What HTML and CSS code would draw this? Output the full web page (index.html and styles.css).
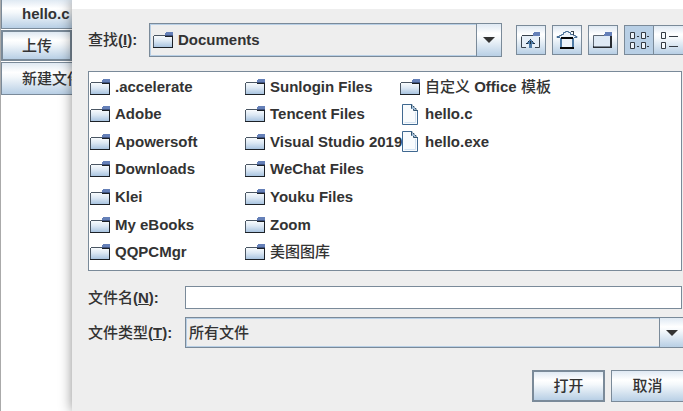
FILE: index.html
```html
<!DOCTYPE html>
<html lang="zh-CN">
<head>
<meta charset="utf-8">
<title>Documents</title>
<link rel="stylesheet" href="styles.css">
</head>
<body>
<svg class="defs" aria-hidden="true">
  <defs>
    <linearGradient id="fill" x1="0" y1="0" x2="0" y2="1">
      <stop offset="0" stop-color="#f8fbfd"/><stop offset=".45" stop-color="#dce8f4"/><stop offset="1" stop-color="#a9c4e0"/>
    </linearGradient>
    <symbol id="folder" viewBox="0 0 20 16">
      <path d="M1 15V4H19V15Z" fill="url(#fill)"/>
      <path d="M0 4H1V15H0ZM1 3H12V4H1Z" fill="#4a5663"/>
      <path d="M12 4H20V5H12ZM19 4H20V16H19ZM0 15H20V16H0Z" fill="#1c2127"/>
      <path d="M12 1H13V0H20V3H12Z" fill="#6580b8"/>
      <path d="M12 3H20V4H12Z" fill="#3f5380"/>
    </symbol>
    <symbol id="file" viewBox="0 0 16 21">
      <path d="M1 1H10L15 6V20H1Z" fill="#f8fbfd"/>
      <path d="M13.500 8V18.500H2.500" fill="none" stroke="#d3e2f1"/>
      <path d="M10 .500H.500V20.500H15.500V6" fill="none" stroke="#3f6890"/>
      <path d="M10 .500V2.500H12V4.500H14V6.500H15.500M9.500 1V4.500H11.500V6.500H14" fill="none" stroke="#31536f"/>
      <path d="M10 2H11V4H13V6H12V5H10Z" fill="#a3bfdc"/>
    </symbol>
  </defs>
</svg>
<div class="window">
  <nav class="side">
    <button class="metal side-button">hello.c</button>
    <button class="metal side-button focused"><span class="cn">上传</span></button>
    <button class="metal side-button"><span class="cn">新建文件</span></button>
  </nav>
  <main class="dialog">
    <div class="title-strip"></div>
    <div class="content">
      <div class="toolbar">
        <label class="look-label" for="look"><span class="cn">查找</span>(<u>I</u>):</label>
        <div class="combo with-icon">
          <select id="look"><option>Documents</option></select>
          <svg class="combo-icon" aria-hidden="true"><use href="#folder"/></svg>
          <span class="metal arrow"></span>
        </div>
        <div class="tools">
          <button class="metal tool" aria-label="向上">
            <svg viewBox="0 0 20 17" width="20" height="17"><path d="M1 4H18V15H1Z" fill="#e6eff8"/><path d="M5 15.500H.500V4.500M1 3.500H12M14 15.500H18.500V5" fill="none" stroke="#38424d"/><path d="M12 1H13V0H19V4H12Z" fill="#6580b8"/><path d="M9 7H10V8H11V9H12V10H13V11H14V12H11V16H8V12H5V11H6V10H7V9H8V8H9Z" fill="#4f7ba6"/><path d="M9 7H10V8H9ZM7 9H8V10H7ZM11 9H12V10H11ZM5 11H7V12H5ZM12 11H14V12H12ZM9 9H10V12H9Z" fill="#1c2f42"/></svg>
          </button>
          <button class="metal tool" aria-label="主目录">
            <svg viewBox="0 0 22 20" width="22" height="20"><path d="M1 7L11 1L21 7V8H1Z" fill="#edf3f9"/><path d="M4 8H18V18H4Z" fill="#4f7ba6"/><path d="M6 8H16V18H6Z" fill="#edf3f9"/><path d="M1 7.500V6.500H3.500V5.500H5.500V4.500H7.500V2.500H9.500V1.500H12.500V2.500H14.500V4.500H17.500V5.500H19.500V6.500H21V7.500H18M1 7.500H4" fill="none" stroke="#456c94"/><path d="M15 1H18V5H17V2H15Z" fill="#38424d"/><path d="M5 7H17V9H5ZM4 17H18V19H4Z" fill="#050505"/></svg>
          </button>
          <button class="metal tool" aria-label="新建文件夹">
            <svg viewBox="0 0 20 16" width="20" height="16"><path d="M1 4H18V15H1Z" fill="#dfeaf5"/><path d="M.500 15V3.500H12" fill="none" stroke="#5b6672"/><path d="M0 14H17V4H19V16H0Z" fill="#282d33"/><path d="M1 14H17V15H1Z" fill="#7f8994"/><path d="M11 2H12V0H19V4H11Z" fill="#6580b8"/></svg>
          </button>
          <div class="views">
            <button class="metal tool pressed" aria-label="列表">
              <svg viewBox="0 0 20 18" width="20" height="18"><path d="M1.500 1.500H5.500V7.500H1.500ZM12.500 1.500H16.500V7.500H12.500ZM1.500 11.500H5.500V17.500H1.500ZM12.500 11.500H16.500V17.500H12.500Z" fill="#edf3f9" stroke="#343b43"/><path d="M8 5.500H10M18 5.500H20M8 15.500H10M18 15.500H20" stroke="#343b43"/></svg>
            </button>
            <button class="metal tool" aria-label="详细信息">
              <svg viewBox="0 0 18 18" width="18" height="18"><path d="M1.500 1.500H5.500V7.500H1.500ZM1.500 11.500H5.500V17.500H1.500Z" fill="#f6fafd" stroke="#343b43"/><path d="M9 5.500H18M9 15.500H18" stroke="#343b43"/></svg>
            </button>
          </div>
        </div>
      </div>
      <ul class="files">
        <li><svg><use href="#folder"/></svg>.accelerate</li>
        <li><svg><use href="#folder"/></svg>Adobe</li>
        <li><svg><use href="#folder"/></svg>Apowersoft</li>
        <li><svg><use href="#folder"/></svg>Downloads</li>
        <li><svg><use href="#folder"/></svg>Klei</li>
        <li><svg><use href="#folder"/></svg>My eBooks</li>
        <li><svg><use href="#folder"/></svg>QQPCMgr</li>
        <li><svg><use href="#folder"/></svg>Sunlogin Files</li>
        <li><svg><use href="#folder"/></svg>Tencent Files</li>
        <li><svg><use href="#folder"/></svg>Visual Studio 2019</li>
        <li><svg><use href="#folder"/></svg>WeChat Files</li>
        <li><svg><use href="#folder"/></svg>Youku Files</li>
        <li><svg><use href="#folder"/></svg>Zoom</li>
        <li><svg><use href="#folder"/></svg><span class="cn">美图图库</span></li>
        <li><svg><use href="#folder"/></svg><span><span class="cn">自定义</span> Office <span class="cn">模板</span></span></li>
        <li><svg class="doc"><use href="#file"/></svg>hello.c</li>
        <li><svg class="doc"><use href="#file"/></svg>hello.exe</li>
      </ul>
      <div class="fields">
        <label for="name"><span class="cn">文件名</span>(<u>N</u>):</label>
        <input id="name" type="text">
        <label for="type"><span class="cn">文件类型</span>(<u>T</u>):</label>
        <div class="combo type-combo">
          <select id="type" class="cn"><option>所有文件</option></select>
          <span class="metal arrow"></span>
        </div>
      </div>
      <div class="actions">
        <button class="metal action default"><span class="cn">打开</span></button>
        <button class="metal action"><span class="cn">取消</span></button>
      </div>
    </div>
  </main>
</div>
</body>
</html>
```

FILE: styles.css
```css
* {
  box-sizing: border-box;
}

body {
  margin: 0;
  background: #fff;
  color: #333;
  font: bold 15px/20px "Liberation Sans", "Noto Sans CJK SC", sans-serif;
}

button,
select,
input {
  margin: 0;
  border-radius: 0;
  color: inherit;
  font: inherit;
}

.cn,
select.cn {
  font-weight: 500;
}

.defs {
  position: absolute;
  width: 0;
  height: 0;
}

.window {
  display: flex;
  min-height: 100vh;
  overflow: hidden;
}

.metal {
  border: 1px solid #7a8a99;
  background: linear-gradient(#dfe9f3, #fff 30%, #f4f8fb 45%, #b8cfe5);
}

.side {
  display: flex;
  flex: 0 0 72px;
  flex-direction: column;
  align-items: flex-start;
  gap: 1px;
  min-width: 0;
  overflow: hidden;
  border-left: 1px solid #aaa;
}

.side-button {
  flex: none;
  min-width: 100px;
  height: 33px;
  padding: 0 0 0 20px;
  text-align: left;
  white-space: nowrap;
}

.side-button:first-child {
  height: 29px;
  border-top: 0;
}

.side-button.focused {
  min-width: 100%;
  height: 31px;
  border: 2px solid #7a8a99;
  padding-left: 19px;
}

.dialog {
  position: relative;
  flex: 1;
  min-width: 0;
  background: #eee;
  box-shadow: 0 0 12px rgba(0, 0, 0, .45);
}

.title-strip {
  height: 9px;
  background: #fff;
}

.content {
  padding: 14px 0 0 16px;
}

.toolbar {
  display: flex;
  align-items: center;
  margin-bottom: 14px;
}

.look-label {
  flex: 0 0 61px;
  white-space: nowrap;
}

.combo {
  position: relative;
  flex: 1;
  height: 34px;
  border: 1px solid #7a8a99;
}

.combo select {
  display: block;
  width: 100%;
  height: 100%;
  padding: 0 24px 0 2px;
  border: 1px solid #b8cfe5;
  appearance: none;
  background: #eee;
}

.with-icon select {
  padding-left: 27px;
}

.combo-icon {
  position: absolute;
  top: 8px;
  left: 3px;
  width: 20px;
  height: 16px;
}

.arrow {
  position: absolute;
  top: 0;
  right: 0;
  bottom: 0;
  display: grid;
  width: 25px;
  place-items: center;
  border-width: 0 0 0 1px;
  pointer-events: none;
}

.arrow::after {
  content: "";
  border: solid transparent;
  border-width: 6px 6px 0;
  border-top-color: #333;
}

.tools {
  display: flex;
  gap: 6px;
  margin: 0 -1px 0 14px;
}

.tool {
  display: grid;
  width: 30px;
  height: 30px;
  padding: 0;
  place-items: center;
}

.views {
  display: flex;
}

.pressed {
  background: #b8cfe5;
}

.views .tool + .tool {
  border-left: 0;
}

.files {
  display: grid;
  grid-auto-columns: 155px;
  grid-auto-flow: column;
  grid-template-rows: repeat(7, 1fr);
  height: 200px;
  margin: 0 1px 15px 0;
  padding: 1px 0 4px 1px;
  border: 1px solid #7a8a99;
  background: #fff;
  list-style: none;
}

.files li {
  display: flex;
  align-items: center;
  gap: 5px;
  white-space: nowrap;
}

.files svg {
  flex: none;
  width: 20px;
  height: 16px;
}

.files .doc {
  height: 21px;
}

.fields {
  display: grid;
  grid-template-columns: 97px 1fr;
  align-items: center;
  row-gap: 8px;
}

.fields label {
  white-space: nowrap;
}

.fields input {
  min-width: 0;
  height: 23px;
  margin-right: 1px;
  padding: 0 4px;
  border: 1px solid #7a8a99;
  background: #fff;
}

.type-combo {
  height: 31px;
  margin-right: -2px;
}

.actions {
  display: flex;
  justify-content: flex-end;
  gap: 6px;
  margin: 22px -1px 0 0;
}

.action {
  width: 73px;
  height: 32px;
  padding: 0;
}

.default {
  border-width: 2px;
}
```
